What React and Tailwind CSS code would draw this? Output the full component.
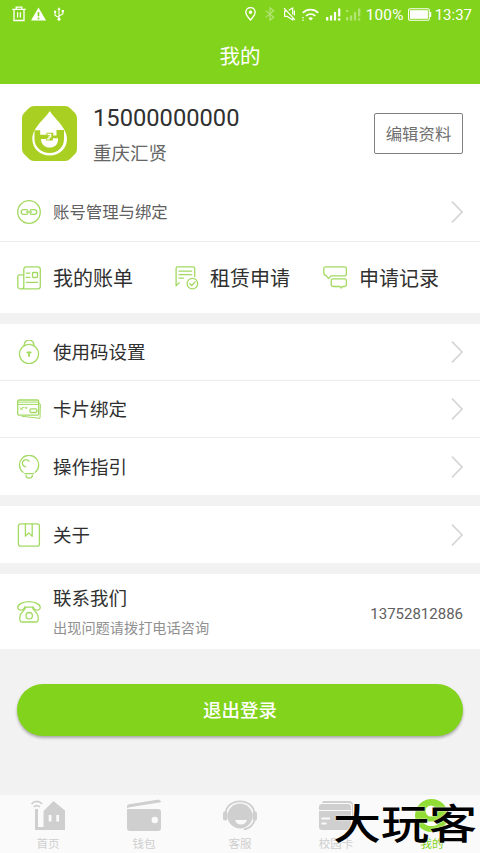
import { useState } from 'react';

const ChevronRight = () => (
  <svg className="w-3 h-[22px]" viewBox="0 0 12 22" fill="none" stroke="#d6d6d6" strokeWidth="1.7">
    <path d="M1 .7L11 11L1 21.3" />
  </svg>
);

const LineIcon = ({ children }) => (
  <svg className="w-6 h-6 shrink-0" viewBox="0 0 24 24" fill="none" stroke="#a3da62" strokeWidth="1.3" strokeLinecap="round" strokeLinejoin="round">
    {children}
  </svg>
);

const icons = {
  link: (
    <LineIcon>
      <circle cx="12" cy="12" r="11.3" />
      <path d="M10.8 10.3A2 2 0 009.300 9.600H6.600a2.400 2.400 0 000 4.800h2.700a2 2 0 001.500-.7M13.200 10.300a2 2 0 011.500-.7h2.700a2.400 2.400 0 010 4.800h-2.700a2 2 0 01-1.500-.7M9.500 12h5" />
    </LineIcon>
  ),
  bill: (
    <LineIcon>
      <path d="M6.8 20.5V3.2A2.400 2.400 0 019.200.8h11.700a2.400 2.400 0 012.400 2.400v17.300a2.400 2.400 0 01-2.400 2.400H3.400A2.600 2.600 0 01.8 20.300V10.600a1.700 1.700 0 011.700-1.700h4.300M6.800 20.400a2.500 2.500 0 01-2.500 2.500" />
      <rect x="15.5" y="6.5" width="5" height="5" rx=".8" />
      <path d="M9.3 7.1h3.6M9.3 11.4h3.6M9.3 16.3h11.5" />
    </LineIcon>
  ),
  rent: (
    <LineIcon>
      <path d="M1.1 19.7V2.3A1.500 1.500 0 012.600.8h15.600a1.500 1.500 0 011.500 1.500v8.200M1.100 19.700L4.300 16.600M4 5.100h12.700M4 8.700h12.700M4 12.100h4.500" />
      <circle cx="17.4" cy="17.6" r="5.3" />
      <path d="M14.8 17.7l1.9 1.8 3.5-3.6" />
    </LineIcon>
  ),
  record: (
    <LineIcon>
      <path d="M2.4.9h19.3a1.700 1.700 0 011.700 1.700v5.500a1.700 1.700 0 01-1.700 1.700H8L5.600 12.600 3.400 9.800C1.800 9.400.8 8.300.8 6.700V2.500A1.600 1.600 0 012.400.9z" />
      <path d="M10 12.800h11.600a1.800 1.800 0 011.800 1.800v4.100a1.800 1.800 0 01-1.800 1.800h-2.200L18.200 22l-1.400-1.500H10a1.800 1.800 0 01-1.800-1.800v-4.100a1.800 1.800 0 011.800-1.800z" />
    </LineIcon>
  ),
  lock: (
    <LineIcon>
      <circle cx="12" cy="14" r="9.6" />
      <path d="M7.200 5.700V5a4.900 4.900 0 019.800 0v.7" />
      <path d="M10.300 12.400h3.400M12 12.500V16" strokeWidth="1.9" />
    </LineIcon>
  ),
  card: (
    <LineIcon>
      <rect x=".7" y="3" width="21" height="15.2" rx="1.5" />
      <path d="M.8 5.100h20.800M.8 7.400h20.800M22 6.300l1.400.8-.4 14.200L5 19.300M3.200 10.700l1 1 1-1h1.600M8.100 10.700h2l-1 1M3.300 12.100h2.200" strokeWidth="1" />
      <rect x="13" y="11.8" width="6.8" height="3.7" rx="1.2" />
    </LineIcon>
  ),
  bulb: (
    <LineIcon>
      <path d="M6 17.300a9.600 9.600 0 1112.200 0M7.800 18.600h8.800M9 20.500c.2 3.500 6.200 3.500 6.400 0M12 6.200a3.600 3.600 0 10-3.300 5.600" />
    </LineIcon>
  ),
  book: (
    <LineIcon>
      <rect x="1.400" y=".8" width="21" height="22.4" rx="2.2" />
      <path d="M8.400 1v12.200l3.300-3.300 3.500 3.300V1" />
    </LineIcon>
  ),
  phone: (
    <LineIcon>
      <path d="M3.700 10.100C2 10.100.7 9.100.8 7.300.9 3.800 7.400 1.600 12 1.600s11.100 2.200 11.200 5.700c.1 1.800-1.200 2.800-2.900 2.800-2 0-3.500-.9-4.100-3H7.800c-.6 2.100-2.100 3-4.100 3z" />
      <path d="M8.200 8.600l-4 4.800c-1 1.200-1.400 2.700-1.400 4.600v1.800a2.200 2.200 0 002.200 2.200h14a2.200 2.200 0 002.200-2.200V18c0-1.900-.4-3.400-1.400-4.600l-4-4.800M8 7v2M16 7v2" />
      <circle cx="12.200" cy="15.700" r="3.200" />
    </LineIcon>
  ),
};

const StatusBar = () => (
  <div className="h-7 pl-[12px] pr-[8px] flex items-center justify-between text-white">
    <div className="flex items-center gap-[5px]">
      <svg className="w-[14px] h-[16px]" viewBox="0 0 14 16" fill="none" stroke="white" strokeWidth="1.3">
        <path d="M.3 3.400h13.400M4.200 3.300V1.200h5.600v2.100M2 3.500v11h10v-11M5.600 6.300v5.300M8.400 6.300v5.300" />
      </svg>
      <svg className="w-[15px] h-[14px]" viewBox="0 0 15 14">
        <path d="M7.500.4L15 13.600H0z" fill="white" />
        <path d="M7.500 5v4.200M7.500 10.500v1.700" stroke="#82d31b" strokeWidth="1.6" />
      </svg>
      <svg className="w-[12px] h-[14px] ml-[2px]" viewBox="0 0 12 14" fill="none" stroke="white" strokeWidth="1.1">
        <path d="M6 2v10M6 10.400L2.100 8.500V5M6 9l3.800-2V4.200" />
        <path d="M6 .2l1.700 2.600H4.300z" fill="white" stroke="none" />
        <circle cx="6" cy="12.300" r="1.500" fill="white" stroke="none" />
        <circle cx="2.100" cy="4.700" r="1.200" fill="white" stroke="none" />
        <path d="M8.700 3h2.300v2.300H8.700z" fill="white" stroke="none" />
      </svg>
    </div>
    <div className="flex items-center">
      <svg className="w-[11px] h-[14px]" viewBox="0 0 11 14" fill="none" stroke="white" strokeWidth="1.3">
        <path d="M5.500 13C3.200 10.300.8 7.800.8 5.200a4.700 4.700 0 019.400 0c0 2.600-2.400 5.100-4.700 7.800z" />
        <circle cx="5.500" cy="5.200" r="1.100" fill="white" />
      </svg>
      <svg className="w-[10px] h-[14px] ml-[9px] opacity-40" viewBox="0 0 10 14" fill="none" stroke="white" strokeWidth="1.2">
        <path d="M.7 3.600l8 6.600L5 13.200V.8l3.700 3L.7 10.400" />
      </svg>
      <svg className="w-[13px] h-[14px] ml-[8px]" viewBox="0 0 13 14" fill="none" stroke="white" strokeWidth="1.2">
        <path d="M1 1.200l11 11.600M3.700 4.200H1.600v5.200h2.600l5.500 3.500v-3M5.800 3.300l3.900-2.200v6.500M11.400 3.600v5" />
      </svg>
      <svg className="w-[17px] h-[13px] ml-[6px]" viewBox="0 0 17 13" fill="none" stroke="white">
        <path d="M.8 4.800C5.100.5 12.100.5 16.200 4.800" strokeWidth="1.7" />
        <path d="M4 8c2.700-2.700 6.700-2.700 9.400 0" strokeWidth="1.7" />
        <path d="M6.400 10.400a3.200 3.200 0 014.600 0l-2.300 2.200z" fill="white" stroke="none" />
        <path d="M1 9v1.200M1 11.600v1.200" strokeWidth="1.4" />
      </svg>
      <svg className="w-[15px] h-[13px] ml-[7px]" viewBox="0 0 15 13" fill="none" stroke="white" strokeWidth="2.2">
        <path d="M1.200 12.500V9M5.100 12.500v-5M9 12.500V4M13.200.5v8M13.200 10.300v2.200" />
      </svg>
      <svg className="w-[15px] h-[13px] ml-[5px] opacity-40" viewBox="0 0 15 13" fill="none" stroke="white" strokeWidth="2.2">
        <path d="M1.200 2v2M1.200 12.500V9M5.100 12.500v-5M9 12.500V4M13.200.5v8M13.200 10.300v2.200" />
      </svg>
      <span className="w-[40px] ml-[5px] pt-[2px] text-[15.400px] leading-4 tracking-[0.200px]">100%</span>
      <svg className="w-[24px] h-[13px] ml-[2px]" viewBox="0 0 24 13">
        <rect x=".6" y=".8" width="20.700" height="11.400" rx="1.500" fill="none" stroke="white" strokeWidth="1.100" />
        <rect x="2" y="2.200" width="17.900" height="8.600" fill="white" />
        <path d="M22.500 4v5" stroke="white" strokeWidth="1.500" />
      </svg>
      <span className="ml-[3px] pt-px text-[15px] leading-4">13:37</span>
    </div>
  </div>
);

const Logo = () => (
  <svg className="w-[55px] h-[55px] shrink-0" viewBox="0 0 55 55">
    <path d="M12 0h31q3 0 5 2l5 5q2 2 2 5v31q0 3-2 5l-5 5q-2 2-5 2H12q-3 0-5-2l-5-5q-2-2-2-5V12q0-3 2-5l5-5q2-2 5-2z" fill="#a9cf22" />
    <path d="M27.800 5c4 7 17.200 16.500 17.200 28C45 42.500 37.500 49.500 27.700 49.500S10.300 42.500 10.300 33C10.300 21.500 23.800 12 27.800 5z" fill="white" />
    <path d="M13.500 24.300h4.700v4.500h6.300v-2h6.700v2.700h3.300v-5.400H42V33c0 8.200-6.200 14-14.300 14S12.500 41.200 12.500 33v-8.700z" fill="#a9cf22" />
    <path d="M19 33h5.200v1.400h6.600v-2.200H36v1.500c0 4.600-3.400 7.900-8.300 7.900S19 38.200 19 33z" fill="white" />
    <path d="M25.500 28.500h3.200v2.300h-1.600v2h-2.300" fill="none" stroke="white" strokeWidth="1.300" />
  </svg>
);

const shortcuts = [
  { label: '我的账单', icon: icons.bill, width: 'w-[158px]', gap: 'gap-3' },
  { label: '租赁申请', icon: icons.rent, width: 'w-[148px]', gap: 'gap-[11px]' },
  { label: '申请记录', icon: icons.record, width: 'w-[130px]', gap: 'gap-3' },
];

const menuGroups = [
  [
    { label: '使用码设置', icon: icons.lock },
    { label: '卡片绑定', icon: icons.card },
    { label: '操作指引', icon: icons.bulb },
  ],
  [{ label: '关于', icon: icons.book }],
];

const tabs = [
  {
    label: '首页',
    icon: (
      <svg className="w-9 h-[34px]" viewBox="0 0 36 34" fill="currentColor">
        <path d="M13.500 12L23.500 2l11.500 9.500V31H5V10h3v18h5.500z" />
        <path d="M18.700 16h2.800v6.500h-2.800zM26.300 16h2.800v6.500h-2.800z" fill="#fafafa" />
        <path d="M1.500 5c3-3.500 7.500-3.500 10.500 0M3.800 8c1.700-1.900 4.300-1.900 6 0" fill="none" stroke="currentColor" strokeWidth="1.700" />
      </svg>
    ),
  },
  {
    label: '钱包',
    icon: (
      <svg className="w-9 h-[34px]" viewBox="0 0 36 34" fill="currentColor">
        <path d="M1 9V7.500c0-1.200.8-2 2.200-2.200L31 .8c2.500-.4 4 .4 4 2.500L5 8z" />
        <path fillRule="evenodd" d="M1 10h31a3 3 0 013 3v16a3 3 0 01-3 3H4a3 3 0 01-3-3zM28.800 17.800a3.200 3.200 0 100 6.400 3.200 3.200 0 000-6.400z" />
      </svg>
    ),
  },
  {
    label: '客服',
    icon: (
      <svg className="w-9 h-[34px]" viewBox="0 0 36 34" fill="currentColor">
        <circle cx="18" cy="17" r="12.500" />
        <path d="M3.500 15C4 6.500 10.500 2.300 18 2.300S32 6.500 32.500 15M33 20c-1.500 6-6 9.500-11 10.500" fill="none" stroke="currentColor" strokeWidth="1.800" />
        <rect x="1" y="12.500" width="4.500" height="9" rx="2" />
        <rect x="30.500" y="12.500" width="4.500" height="9" rx="2" />
        <path d="M13 21h12c-1 3-3 4.500-6 4.500S14 24 13 21z" fill="#fafafa" />
      </svg>
    ),
  },
  {
    label: '校园卡',
    icon: (
      <svg className="w-9 h-[34px]" viewBox="0 0 36 34" fill="currentColor">
        <path d="M5 2h26a4 4 0 014 4v21h-1V7a3 3 0 00-3-3H4z" />
        <path d="M1 8a3 3 0 013-3h26a3 3 0 013 3v3H1zM1 12h32v16a3 3 0 01-3 3H4a3 3 0 01-3-3z" />
        <path d="M3.500 19.500h8.500M3.500 24.500h5" stroke="#fafafa" strokeWidth="1.800" />
      </svg>
    ),
  },
  {
    label: '我的',
    icon: (
      <svg className="w-9 h-[34px]" viewBox="0 0 36 34">
        <circle cx="17.500" cy="16.500" r="16.500" fill="#92dc36" />
        <circle cx="17" cy="12" r="5.500" fill="white" />
        <path d="M8.500 21c5 2 13 2 18 0-1 4-4.500 6-9 6s-8-2-9-6z" fill="white" />
      </svg>
    ),
  },
];

const MenuRow = ({ item }) => (
  <div className="h-[57px] px-[17px] flex items-center border-b border-[#ededed] last:border-b-0">
    {item.icon}
    <span className="ml-3 pt-[3px] flex-1 text-[18.500px] leading-none text-[#303030]">{item.label}</span>
    <ChevronRight />
  </div>
);

const App = () => {
  const [activeTab, setActiveTab] = useState('我的');

  return (
    <div className="relative w-full h-[853px] overflow-hidden flex flex-col bg-[#f2f2f2] font-[Roboto,'Noto_Sans_CJK_SC',sans-serif]">
      {/* Header */}
      <header className="h-[84px] shrink-0 bg-[#82d31b]">
        <StatusBar />
        <h1 className="h-14 pt-[3px] flex items-center justify-center text-[20.500px] leading-none text-white">我的</h1>
      </header>

      {/* Profile */}
      <section className="bg-white">
        <div className="h-[99px] pl-[22px] pr-[17px] flex items-center">
          <Logo />
          <div className="ml-4 pt-[4px] flex-1">
            <p className="text-[23.700px] leading-[30px] text-[#303030]">15000000000</p>
            <p className="mt-[7px] text-[18.500px] leading-[28px] text-[#666]">重庆汇贤</p>
          </div>
          <button className="w-[89px] h-[41px] pt-[3px] border border-[#808080] rounded-[2px] text-[16.400px] leading-none text-[#707070]">
            编辑资料
          </button>
        </div>
        <div className="h-[59px] px-[17px] flex items-center border-b border-[#ededed]">
          {icons.link}
          <span className="ml-3 pt-[3px] flex-1 text-[16.400px] leading-none text-[#606060]">账号管理与绑定</span>
          <ChevronRight />
        </div>
        <div className="h-[71px] pl-[17px] flex items-center">
          {shortcuts.map((item) => (
            <div key={item.label} className={`flex items-center ${item.width} ${item.gap}`}>
              {item.icon}
              <span className="pt-[2px] text-[20px] leading-none text-[#303030] whitespace-nowrap">{item.label}</span>
            </div>
          ))}
        </div>
      </section>

      {/* Menu */}
      {menuGroups.map((group, index) => (
        <section key={index} className="mt-[11px] bg-white">
          {group.map((item) => (
            <MenuRow key={item.label} item={item} />
          ))}
        </section>
      ))}

      {/* Contact */}
      <section className="mt-[11px] h-[75px] px-[17px] flex items-center bg-white">
        {icons.phone}
        <div className="ml-3 pt-[2px] flex-1">
          <p className="text-[18.500px] leading-7 text-[#303030]">联系我们</p>
          <p className="mt-[3px] text-[14.200px] leading-[24px] text-[#909090]">出现问题请拨打电话咨询</p>
        </div>
        <span className="pt-[5px] text-[15px] text-[#606060]">13752812886</span>
      </section>

      <button className="mt-[35px] mx-[17px] h-[52px] pt-[2px] shrink-0 rounded-full bg-[#82d31b] text-[18.500px] leading-none font-medium text-white shadow-[0_2px_3px_rgba(0,0,0,0.3)]">
        退出登录
      </button>

      {/* Tab bar */}
      <nav className="mt-auto h-[58px] grid grid-cols-5 bg-[#fafafa]">
        {tabs.map((tab) => (
          <button
            key={tab.label}
            onClick={() => setActiveTab(tab.label)}
            className={`pt-[4px] flex flex-col items-center ${activeTab === tab.label ? 'text-[#82d31b]' : 'text-[#cfcfcf]'}`}
          >
            {tab.icon}
            <span className="mt-[5px] text-[11.500px] leading-[13px]">{tab.label}</span>
          </button>
        ))}
      </nav>

      <span className="absolute left-[333px] bottom-[2px] text-[48px] leading-[52px] font-medium text-black whitespace-nowrap pointer-events-none origin-center scale-y-[0.86] [text-shadow:0_0_2px_white]">
        大玩客
      </span>
    </div>
  );
};

export default App;
